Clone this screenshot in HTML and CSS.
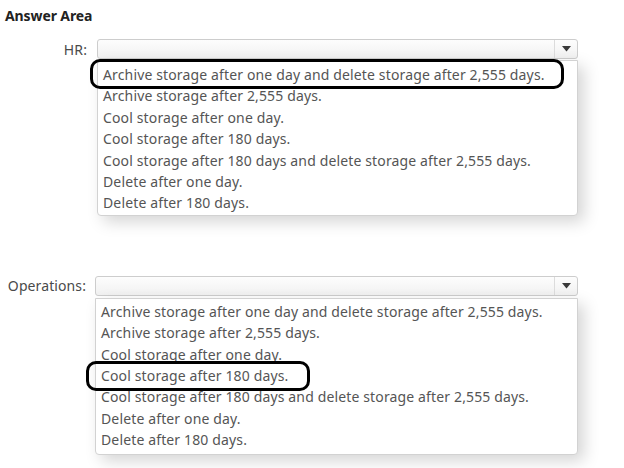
FILE: index.html
```html
<!DOCTYPE html>
<html lang="en">
<head>
<meta charset="utf-8">
<title>Answer Area</title>
<link rel="stylesheet" href="styles.css">
</head>
<body>
<main class="answer-area">
  <h1 class="title">Answer Area</h1>

  <section class="field field--hr">
    <span class="label">HR:</span>
    <div class="select">
      <span class="select-value"></span>
      <span class="select-arrow"><svg width="9" height="6" viewBox="0 0 9 6"><path d="M0 0 L9 0 L4.5 5.5 Z" fill="#3a3a3a"/></svg></span>
    </div>
    <ul class="options">
      <li class="option"><span class="mark mark--hr">Archive storage after one day and delete storage after 2,555 days.</span></li>
      <li class="option">Archive storage after 2,555 days.</li>
      <li class="option">Cool storage after one day.</li>
      <li class="option">Cool storage after 180 days.</li>
      <li class="option">Cool storage after 180 days and delete storage after 2,555 days.</li>
      <li class="option">Delete after one day.</li>
      <li class="option">Delete after 180 days.</li>
    </ul>
  </section>

  <section class="field field--ops">
    <span class="label">Operations:</span>
    <div class="select">
      <span class="select-value"></span>
      <span class="select-arrow"><svg width="9" height="6" viewBox="0 0 9 6"><path d="M0 0 L9 0 L4.5 5.5 Z" fill="#3a3a3a"/></svg></span>
    </div>
    <ul class="options">
      <li class="option">Archive storage after one day and delete storage after 2,555 days.</li>
      <li class="option">Archive storage after 2,555 days.</li>
      <li class="option">Cool storage after one day.</li>
      <li class="option"><span class="mark mark--ops">Cool storage after 180 days.</span></li>
      <li class="option">Cool storage after 180 days and delete storage after 2,555 days.</li>
      <li class="option">Delete after one day.</li>
      <li class="option">Delete after 180 days.</li>
    </ul>
  </section>
</main>
</body>
</html>
```

FILE: styles.css
```css
html, body {
  margin: 0;
  padding: 0;
  background: #ffffff;
}

body {
  font-family: "Noto Sans", "Open Sans", sans-serif;
  color: #555555;
  width: 624px;
  height: 468px;
  overflow: hidden;
}

.answer-area {
  padding: 7px 0 0 5px;
}

.title {
  margin: 0;
  font-size: 14px;
  line-height: 18px;
  font-weight: 700;
  color: #222222;
  letter-spacing: -0.1px;
}

.field {
  display: grid;
  grid-template-columns: 82px 481px;
  column-gap: 10px;
  align-items: center;
}

.field--hr {
  margin-top: 14px;
}

.field--ops {
  margin-top: 60px;
  grid-template-columns: 81px 483px;
  column-gap: 9px;
}

.label {
  text-align: right;
  font-size: 14px;
  color: #4a4a4a;
  letter-spacing: 0.1px;
}

.select {
  height: 20px;
  box-sizing: border-box;
  border: 1px solid #cdcdcd;
  border-radius: 3px;
  background: linear-gradient(#fdfdfd, #f1f1f1);
  display: flex;
}

.select-value {
  flex: 1;
}

.select-arrow {
  width: 22px;
  border-left: 1px solid #dcdcdc;
  display: flex;
  align-items: center;
  justify-content: center;
}

.options {
  grid-column: 2;
  list-style: none;
  margin: 1px 0 0 0;
  padding: 3px 0 1px 5px;
  background: #ffffff;
  border: 1px solid #d2d2d2;
  border-radius: 0 0 4px 4px;
  box-shadow: 6px 6px 16px rgba(0, 0, 0, 0.17);
}

.field--ops .options {
  margin-top: 2px;
  padding-top: 2px;
  padding-bottom: 3px;
}

.option {
  font-size: 14px;
  line-height: 21.4px;
  white-space: nowrap;
  color: #555555;
  letter-spacing: 0.14px;
}

.mark {
  position: relative;
}

.mark::after {
  content: "";
  position: absolute;
  border: 3px solid #000000;
  border-radius: 10px;
}

.mark--hr::after {
  left: -13px;
  right: -19px;
  top: -6px;
  bottom: -5px;
}

.mark--ops::after {
  left: -15px;
  right: -22px;
  top: -5px;
  bottom: -6px;
}
```
